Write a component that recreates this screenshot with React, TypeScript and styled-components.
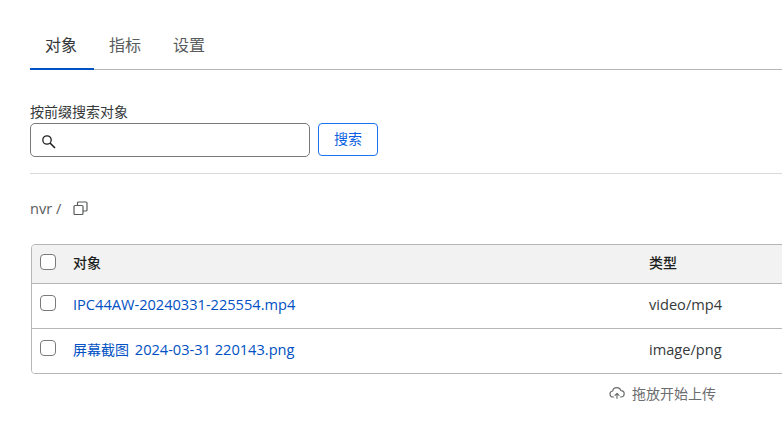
import React from 'react';
import styled, { createGlobalStyle } from 'styled-components';

const GlobalStyle = createGlobalStyle`
  html, body {
    margin: 0;
    padding: 0;
    width: 782px;
    height: 427px;
    overflow: hidden;
    background: #fff;
  }
  * {
    box-sizing: border-box;
  }
`;

const Page = styled.div`
  width: 782px;
  height: 427px;
  padding: 22px 0 0 30px;
  overflow: hidden;
  font-family: 'Open Sans', 'Noto Sans CJK SC', sans-serif;
  font-size: 14.6px;
  color: #36393a;
`;

const Tabs = styled.div`
  display: flex;
  height: 48px;
  border-bottom: 1px solid #b6b6b6;
`;

const Tab = styled.div<{ active?: boolean }>`
  width: 64px;
  height: 48px;
  display: flex;
  align-items: center;
  justify-content: center;
  padding: 0 2px 3px 0;
  font-size: 16px;
  color: ${(props) => (props.active ? '#36393a' : '#595b5c')};
  border-bottom: 2px solid ${(props) => (props.active ? '#0051c3' : 'transparent')};
`;

const SearchForm = styled.div`
  margin-top: 32px;
  height: 72px;
  border-bottom: 1px solid #d9d9d9;
`;

const Label = styled.div`
  height: 21px;
  font-size: 14px;
  line-height: 20px;
  color: #36393a;
`;

const SearchRow = styled.div`
  display: flex;
  align-items: flex-start;
  gap: 8px;
`;

const InputBox = styled.div`
  width: 280px;
  height: 34px;
  display: flex;
  align-items: center;
  padding: 3px 0 0 10px;
  border: 1px solid #797979;
  border-radius: 5px;
`;

const SearchButton = styled.button`
  width: 60px;
  height: 33px;
  padding: 0 0 3px;
  font-family: inherit;
  font-size: 14px;
  color: #0a5fe0;
  background: #fff;
  border: 1px solid #1a73f0;
  border-radius: 4px;
`;

const Crumb = styled.div`
  height: 70px;
  display: flex;
  align-items: flex-start;
  padding-top: 24px;
  line-height: 21px;
  color: #595b5c;
`;

const CopyIcon = styled.svg`
  margin: 3px 0 0 12px;
`;

const Table = styled.div`
  width: 1000px;
  margin-left: 1px;
  border: 1px solid #b6b6b6;
  border-radius: 4px;
  overflow: hidden;
`;

const Row = styled.div<{ head?: boolean; h: number }>`
  display: grid;
  grid-template-columns: 41px 576px 1fr;
  height: ${(props) => props.h}px;
  align-items: center;
  padding-bottom: 4px;
  background: ${(props) => (props.head ? '#f2f2f2' : '#fff')};
  font-weight: ${(props) => (props.head ? 500 : 400)};
  font-size: ${(props) => (props.head ? '14px' : '14.6px')};
  color: ${(props) => (props.head ? '#1d1f20' : '#36393a')};
  & + & {
    border-top: 1px solid #b6b6b6;
  }
`;

const Check = styled.span<{ head?: boolean }>`
  display: block;
  width: 16px;
  height: 16px;
  margin: 0 0 ${(props) => (props.head ? 1 : 3)}px 8px;
  border: 1px solid #7a7a7a;
  border-radius: 4px;
  background: #fff;
`;

const FileLink = styled.a`
  color: #0051c3;
  text-decoration: none;
`;

const Cjk = styled.span`
  margin-right: 2px;
  font-size: 14px;
`;

const Dropzone = styled.div`
  display: flex;
  align-items: center;
  gap: 6px;
  margin: 8px 0 0 578px;
  height: 21px;
  font-size: 14px;
  color: #6b6d6e;
`;

const files = [
  { prefix: '', name: 'IPC44AW-20240331-225554.mp4', type: 'video/mp4' },
  { prefix: '屏幕截图', name: ' 2024-03-31 220143.png', type: 'image/png' },
];

export default function App() {
  return (
    <Page>
      <GlobalStyle />
      <Tabs>
        <Tab active>对象</Tab>
        <Tab>指标</Tab>
        <Tab>设置</Tab>
      </Tabs>
      <SearchForm>
        <Label>按前缀搜索对象</Label>
        <SearchRow>
          <InputBox>
            <svg width="15" height="15" viewBox="0 0 15 15" fill="none" stroke="#1d1f20" strokeWidth="1.3">
              <circle cx="6" cy="6" r="4.2" />
              <path d="M9 9l5 5" strokeWidth="1.6" />
            </svg>
          </InputBox>
          <SearchButton>搜索</SearchButton>
        </SearchRow>
      </SearchForm>
      <Crumb>
        nvr /
        <CopyIcon width="15" height="15" viewBox="0 0 15 15" fill="none" stroke="#595b5c" strokeWidth="1.2">
          <rect x="1" y="4.5" width="9" height="9" rx="1" />
          <path d="M4.5 4.5V2a1 1 0 0 1 1-1h7.5a1 1 0 0 1 1 1v7a1 1 0 0 1-1 1h-3" />
        </CopyIcon>
      </Crumb>
      <Table>
        <Row head h={38}>
          <Check head />
          <span>对象</span>
          <span>类型</span>
        </Row>
        {files.map((file) => (
          <Row key={file.name} h={45}>
            <Check />
            <FileLink>
              {file.prefix && <Cjk>{file.prefix}</Cjk>}
              {file.name}
            </FileLink>
            <span>{file.type}</span>
          </Row>
        ))}
      </Table>
      <Dropzone>
        <svg width="18" height="16" viewBox="0 0 24 24" fill="none" stroke="#6b6d6e" strokeWidth="1.8" strokeLinecap="round" strokeLinejoin="round">
          <path d="M7 18H6a4.5 4.5 0 0 1-.6-8.96A6.5 6.5 0 0 1 18 8.5a4.75 4.75 0 0 1 0 9.5h-1" />
          <path d="M12 20v-7M9 15.5 12 12.5l3 3" />
        </svg>
        拖放开始上传
      </Dropzone>
    </Page>
  );
}
